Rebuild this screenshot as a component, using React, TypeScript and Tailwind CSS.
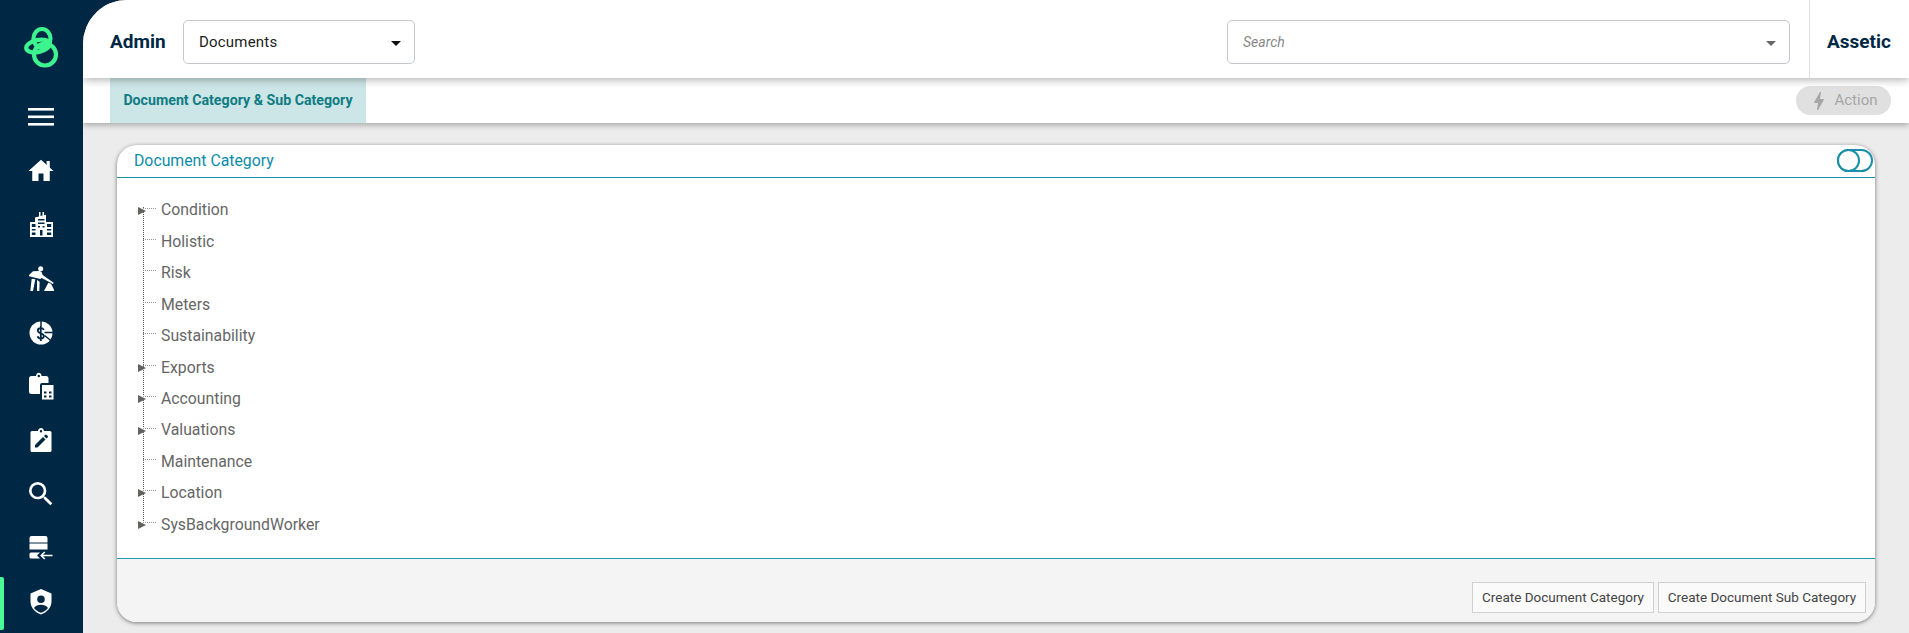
import React from "react";
import { MdSearch, MdArrowDropDown, MdBolt } from "react-icons/md";

const Logo = () => (
  <svg width="55" height="60" viewBox="15 15 55 60" fill="none" stroke="#3df58f" strokeWidth="4.2">
    <ellipse cx="42" cy="38.500" rx="8.500" ry="9.500" />
    <circle cx="45" cy="54.500" r="11" />
    <ellipse cx="38" cy="46" rx="12" ry="6" transform="rotate(-12 38 46)" />
  </svg>
);

const Menu = () => (
  <svg width="26" height="18" viewBox="0 0 26 18" fill="white"><rect y="0" width="26" height="2.6" /><rect y="7.500" width="26" height="2.6" /><rect y="15" width="26" height="2.6" /></svg>
);
const Home = () => (
  <svg width="30" height="30" viewBox="0 0 24 24" fill="white">
    <path d="M10 20v-6h4v6h5v-8h3L12 3 2 12h3v8z" />
    <path d="M19 9.800V4h-2.500v3.500z" />
  </svg>
);
const Building = () => (
  <svg width="23" height="25" viewBox="0 0 23 25" fill="white">
    <path fillRule="evenodd" d="M7 5l2-.5V0h1.500v4.100l2-.5V0H14v3.200L16 2.800V10h7v15H0V10h5V5.500zM8 7v1.500h6.500V7zm0 3.500V12h6.500v-1.500zM8 14v1.500h2V14zm4.500 0v1.500h2V14zM1.800 12v3h3.700v-3zm0 5v1.500h3.700V17zm0 3.500V23h3.700v-2.500zM17 12v3h4.200v-3zm0 5v1.500h4.200V17zm0 3.500V23h4.200v-2.500zM10 18v5.500h2.500V18z" />
  </svg>
);
const Worker = () => (
  <svg width="25" height="25" viewBox="0 0 75 75" fill="white">
    <circle cx="35" cy="8" r="7.500" />
    <path d="M0 27L12 16 32 15 38 18 41 27 74 50 72 54 38 36 34 39 0 31z" />
    <path d="M8 38L19 40 12 75 4 75z" />
    <path d="M24 42L32 47 31 75 24 75z" />
    <path d="M45 75L58 50 66 53 77 75z" />
  </svg>
);
const Dollar = () => (
  <svg width="24" height="24" viewBox="0 0 24 24">
    <circle cx="12" cy="12" r="11.500" fill="white" />
    <path d="M12 0v5M15.500 11.500H24M15.500 14.500L22.500 20" stroke="#002845" strokeWidth="1.500" fill="none" />
    <path d="M14.800 9c-.5-1.200-1.500-1.800-3-1.800-1.800 0-3 1-3 2.400 0 3.400 6 2 6 5.400 0 1.500-1.300 2.500-3 2.500-1.700 0-2.800-.8-3.200-2.200M11.800 5v15" stroke="#002845" strokeWidth="1.800" fill="none" />
  </svg>
);
const ClipCalc = () => (
  <svg width="26" height="28" viewBox="0 0 26 28" fill="white">
    <path fillRule="evenodd" d="M3.500 4h4.500c.3-2 1.500-3.200 2.800-3.200S13.300 2 13.600 4H18a2.500 2.500 0 0 1 2.500 2.500V11H14a2 2 0 0 0-2 2v9H3.500A2.500 2.500 0 0 1 1 19.500v-13A2.500 2.500 0 0 1 3.500 4zm7.300-1.200a1.200 1.200 0 1 0 0 2.400 1.200 1.200 0 0 0 0-2.400z" />
    <path fillRule="evenodd" d="M14 13h11.500v14.500H14zM16 19.500v2h2.500v-2zm5 0v2h2.500v-2zM16 23.500v2h2.500v-2zm5 0v2h2.500v-2z" />
  </svg>
);
const ClipEdit = () => (
  <svg width="22" height="24" viewBox="0 0 22 24" fill="white">
    <path fillRule="evenodd" d="M2 3h6c.3-1.800 1.500-3 3-3s2.700 1.200 3 3h6a1.500 1.500 0 0 1 1.500 1.500v18A1.500 1.500 0 0 1 20 24H2a1.500 1.500 0 0 1-1.500-1.500v-18A1.500 1.500 0 0 1 2 3zm9-1a1.200 1.200 0 1 0 0 2.400A1.200 1.200 0 0 0 11 2zM5 19.500V17l8-8 2.500 2.500-8 8zM14 8l1.300-1.300a.8.800 0 0 1 1.100 0l1.400 1.400a.8.800 0 0 1 0 1.100L16.500 10.500z" />
  </svg>
);
const ServerIn = () => (
  <svg width="24" height="24" viewBox="0 0 24 24" fill="white">
    <path d="M0.500 2a2 2 0 0 1 2-2h14a2 2 0 0 1 2 2v4.500H.5zM.5 7.500h18v6H.5zM2 16.500h9L9 18.500 8 19.500 9 20.500 11 22.500H2A1.500 1.500 0 0 1 .5 21v-3A1.500 1.500 0 0 1 2 16.500z" />
    <path d="M23.500 18.700H14l2.300-2.200-1.100-1.100-4.100 4.100 4.100 4.100 1.100-1.100-2.300-2.200h9.500z" />
  </svg>
);
const Shield = () => (
  <svg width="24" height="26" viewBox="0 0 24 26" fill="white">
    <path fillRule="evenodd" d="M12 0l10.500 4.500v8c0 6-4.500 11-10.500 13C6 23.500 1.500 18.500 1.500 12.500v-8zM12 6.500a3.800 3.800 0 1 0 0 7.600 3.800 3.800 0 0 0 0-7.600zM5 19c1.500 2 4 3.800 7 4.800 3-1 5.500-2.800 7-4.800-1.500-2-4-3.200-7-3.200S6.500 17 5 19z" />
  </svg>
);

const items: React.ReactNode[] = [
  <Menu />,
  <Home />,
  <Building />,
  <Worker />,
  <Dollar />,
  <ClipCalc />,
  <ClipEdit />,
  <MdSearch size={32} color="white" />,
  <ServerIn />,
  <Shield />,
];

const tree: [string, boolean][] = [
  ["Condition", true],
  ["Holistic", false],
  ["Risk", false],
  ["Meters", false],
  ["Sustainability", false],
  ["Exports", true],
  ["Accounting", true],
  ["Valuations", true],
  ["Maintenance", false],
  ["Location", true],
  ["SysBackgroundWorker", true],
];

export default function App() {
  return (
    <div className="flex h-screen w-full overflow-hidden bg-[#002845] font-['Roboto',sans-serif]">
      <aside className="flex w-[83px] shrink-0 flex-col">
        <div className="flex h-[90px] items-center justify-center pl-[2px]"><Logo /></div>
        {items.map((icon, i) => (
          <div key={i} className="relative flex h-[53.9px] items-center justify-center pr-[1px]">
            {i === items.length - 1 && <div className="absolute left-0 top-[2px] h-[53px] w-[4px] rounded-r-[2px] bg-[#4dfa9a]" />}
            {icon}
          </div>
        ))}
      </aside>
      <main className="flex min-w-0 flex-1 flex-col overflow-hidden rounded-tl-[44px] bg-[#ececec]">
        <header className="relative z-20 flex h-[78px] shrink-0 items-center bg-white pl-[27px] pt-[5px] shadow-[0_2px_8px_rgba(0,0,0,0.3)]">
          <span className="w-[73px] pt-[2px] text-[19px] font-bold text-[#002845]">Admin</span>
          <div className="flex h-[44px] w-[232px] items-center justify-between rounded-[5px] border border-[#c4c7cc] pl-[15px] pr-[6px] pt-[2px] text-[15px] tracking-[0.2px] text-[#222222]">
            Documents
            <MdArrowDropDown size={24} color="#111111" />
          </div>
          <div className="ml-[812px] flex h-[44px] w-[563px] items-center justify-between rounded-[5px] border border-[#c4c7cc] pl-[15px] pr-[6px] pt-[2px] text-[14px] italic text-[#888888]">
            Search
            <MdArrowDropDown size={24} color="#666666" />
          </div>
          <div className="ml-[19px] mt-[-5px] flex h-[78px] flex-1 items-center border-l border-[#dddddd] pl-[17px] pt-[7px] text-[19px] font-bold text-[#002845]">Assetic</div>
        </header>
        <div className="relative z-10 flex h-[45px] shrink-0 items-center justify-between bg-white pl-[27px] pr-[18px] shadow-[0_2px_6px_rgba(0,0,0,0.3)]">
          <div className="flex h-full w-[256px] items-center justify-center bg-[#cce5e6] text-[14.2px] font-bold text-[#0f7c83]">Document Category &amp; Sub Category</div>
          <div className="flex h-[29px] w-[95px] items-center justify-center gap-[3px] rounded-full bg-[#e0e0e0] pr-[2px] text-[15px] text-[#a6a6a6]">
            <MdBolt size={24} color="#a6a6a6" />
            Action
          </div>
        </div>
        <section className="mb-[11px] ml-[34px] mr-[34px] mt-[22px] flex flex-1 flex-col overflow-hidden rounded-[20px] bg-white shadow-[0_1px_4px_rgba(0,0,0,0.5)]">
          <div className="flex h-[33px] shrink-0 items-center justify-between border-b border-[#1a8fa8] pl-[17px] pr-[2px]">
            <span className="text-[15.8px] leading-none text-[#0d8ca8]">Document Category</span>
            <div className="relative mb-[2px] h-[23px] w-[36px] rounded-full border-2 border-[#1a8fa8]">
              <div className="absolute left-[-2px] top-[-2px] h-[23px] w-[23px] rounded-full border-2 border-[#1a8fa8] bg-white" />
            </div>
          </div>
          <div className="relative flex-1 pl-[44px] pt-[16.5px] text-[15.8px] text-[#666666]">
            <div className="absolute left-[26px] top-[29px] h-[316px] border-l border-dotted border-[#555555]" />
            {tree.map(([name, arrow]) => (
              <div key={name} className="relative flex h-[31.45px] items-center">
                <div className="absolute left-[-18px] top-[13px] w-[13px] border-t border-dotted border-[#999999]" />
                {arrow && <div className="absolute left-[-23px] top-[12px] h-0 w-0 border-y-[4.5px] border-l-[8px] border-y-transparent border-l-[#65625e]" />}
                {name}
              </div>
            ))}
          </div>
          <div className="flex h-[64px] shrink-0 items-start justify-end gap-[4px] border-t border-[#1a9cb0] bg-[#f4f4f4] pr-[9px] pt-[23px]">
            <div className="flex h-[31px] w-[182px] items-center justify-center border border-[#d0d0d0] bg-[#fafafa] text-[13.5px] text-[#444444]">Create Document Category</div>
            <div className="flex h-[31px] w-[208px] items-center justify-center border border-[#d0d0d0] bg-[#fafafa] text-[13.5px] text-[#444444]">Create Document Sub Category</div>
          </div>
        </section>
      </main>
    </div>
  );
}
